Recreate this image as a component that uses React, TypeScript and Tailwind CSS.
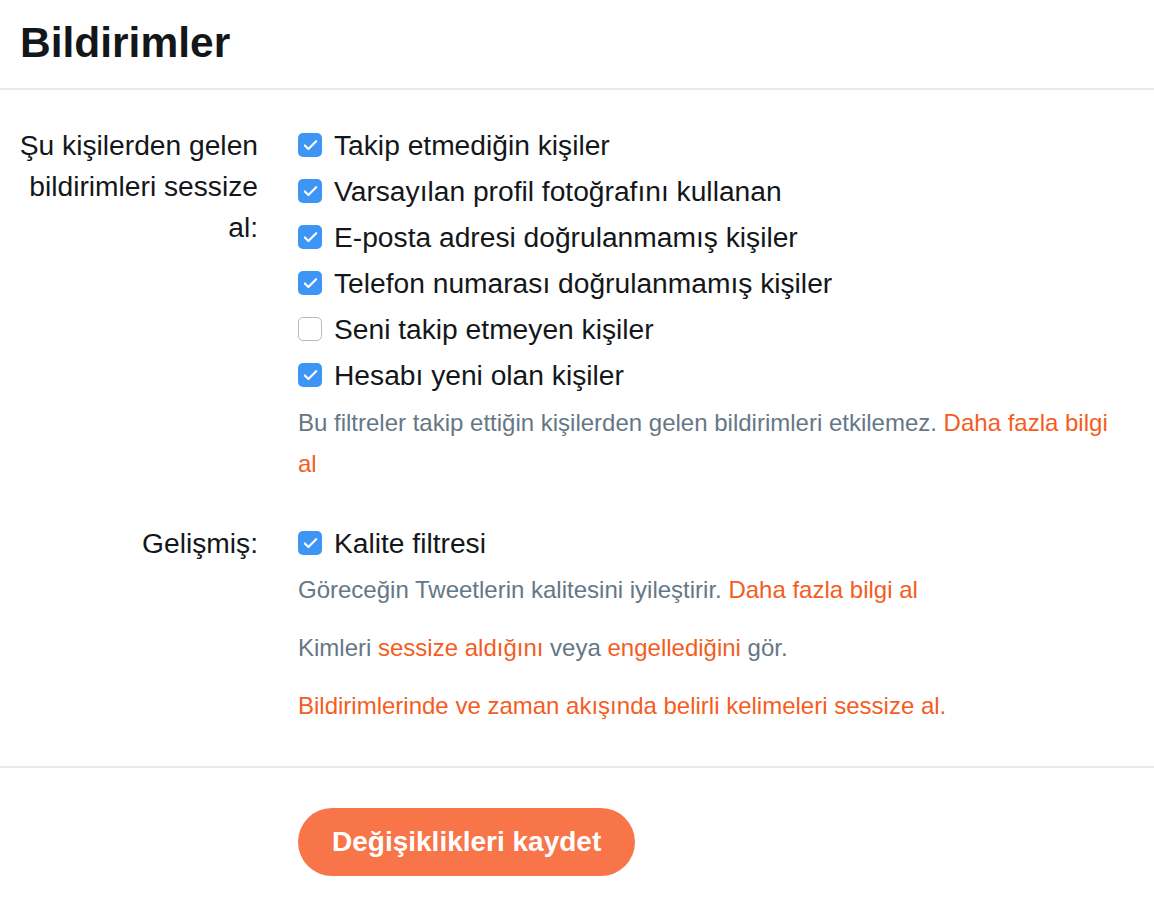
import { Check } from 'lucide-react'

const filtreler = [
  { label: 'Takip etmediğin kişiler', checked: true },
  { label: 'Varsayılan profil fotoğrafını kullanan', checked: true },
  { label: 'E-posta adresi doğrulanmamış kişiler', checked: true },
  { label: 'Telefon numarası doğrulanmamış kişiler', checked: true },
  { label: 'Seni takip etmeyen kişiler', checked: false },
  { label: 'Hesabı yeni olan kişiler', checked: true },
]

const Kutu = ({ checked }: { checked: boolean }) =>
  checked ? (
    <span className="w-[24px] h-[24px] rounded-[5px] bg-[#3d95f5] flex items-center justify-center shrink-0">
      <Check size={17} strokeWidth={3} className="text-white" />
    </span>
  ) : (
    <span className="w-[24px] h-[24px] rounded-[5px] bg-white border border-[#b9b9b9] shrink-0"></span>
  )

const Satir = ({ label, checked }: { label: string; checked: boolean }) => (
  <label className="flex items-center gap-[12px] h-[46px] text-[28.2px] text-[#14171a]">
    <Kutu checked={checked} />
    <span>{label}</span>
  </label>
)

export default function App() {
  return (
    <div className="w-[1154px] min-h-[900px] bg-white font-['Liberation_Sans',Arial,sans-serif]">
      <div className="h-[90px] border-b-2 border-[#e6ecf0] pl-[20px] pt-[18px]">
        <h1 className="text-[42.5px] font-bold leading-[50px] text-[#14171a]">Bildirimler</h1>
      </div>

      <div className="pt-[32px] pb-[40px] border-b-2 border-[#e6ecf0]">
        <div className="flex">
          <div className="w-[258px] shrink-0 text-right text-[28.2px] leading-[41px] text-[#14171a] pt-[3px] pl-[10px]">
            Şu kişilerden gelen bildirimleri sessize al:
          </div>
          <div className="ml-[40px] flex-1 pr-[30px]">
            {filtreler.map((f) => (
              <Satir key={f.label} label={f.label} checked={f.checked} />
            ))}
            <p className="text-[24px] leading-[41px] text-[#657786] mt-[4px]">
              Bu filtreler takip ettiğin kişilerden gelen bildirimleri etkilemez.{' '}
              <a className="text-[#f45d22]">Daha fazla bilgi al</a>
            </p>
          </div>
        </div>

        <div className="flex mt-[36px]">
          <div className="w-[258px] shrink-0 text-right text-[28.2px] leading-[46px] text-[#14171a]">
            Gelişmiş:
          </div>
          <div className="ml-[40px] flex-1 pr-[30px]">
            <Satir label="Kalite filtresi" checked={true} />
            <p className="text-[24px] leading-[41px] text-[#657786] mt-[3px]">
              Göreceğin Tweetlerin kalitesini iyileştirir.{' '}
              <a className="text-[#f45d22]">Daha fazla bilgi al</a>
            </p>
            <p className="text-[24px] leading-[41px] text-[#657786] mt-[17px]">
              Kimleri <a className="text-[#f45d22]">sessize aldığını</a> veya{' '}
              <a className="text-[#f45d22]">engellediğini</a> gör.
            </p>
            <p className="text-[24px] leading-[41px] text-[#f45d22] mt-[17px]">
              Bildirimlerinde ve zaman akışında belirli kelimeleri sessize al.
            </p>
          </div>
        </div>
      </div>

      <div className="pt-[40px] pl-[298px]">
        <button className="h-[68px] px-[34px] rounded-full bg-[#f87549] text-white text-[28px] font-bold">
          Değişiklikleri kaydet
        </button>
      </div>
    </div>
  )
}
